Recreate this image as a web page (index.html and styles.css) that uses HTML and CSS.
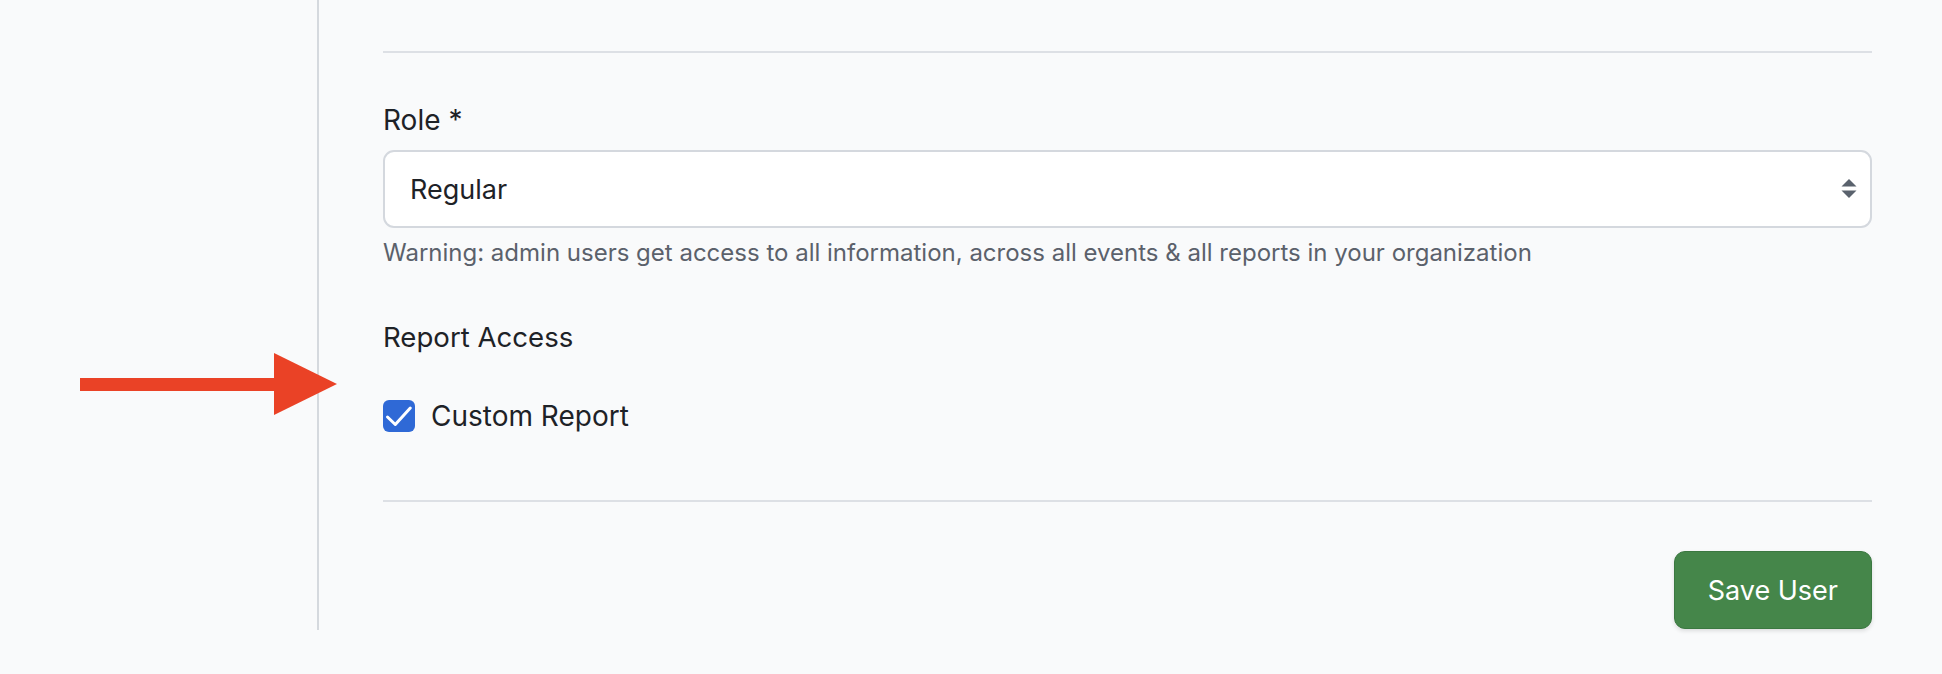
FILE: index.html
```html
<!DOCTYPE html>
<html lang="en">
<head>
<meta charset="utf-8">
<title>Edit User</title>
<link rel="stylesheet" href="styles.css">
</head>
<body>
<div class="layout">
  <aside class="sidebar"></aside>
  <main class="main">
    <hr class="divider divider-top">
    <label class="field-label" for="role">Role *</label>
    <div class="select-wrap">
      <select id="role" class="select">
        <option>Regular</option>
        <option>Admin</option>
      </select>
      <svg class="select-arrows" width="16" height="20" viewBox="0 0 16 20" aria-hidden="true">
        <path d="M8 0 L15.5 7.5 L0.5 7.5 Z" fill="#5a626d"/>
        <path d="M0.5 11.5 L15.5 11.5 L8 19 Z" fill="#5a626d"/>
      </svg>
    </div>
    <p class="help">Warning: admin users get access to all information, across all events &amp; all reports in your organization</p>
    <div class="section-title">Report Access</div>
    <label class="check-row">
      <span class="checkbox">
        <svg width="32" height="32" viewBox="0 0 32 32" aria-hidden="true">
          <path d="M4.5 17 L12.3 24.5 L27.3 8" fill="none" stroke="#ffffff" stroke-width="3" stroke-linecap="round" stroke-linejoin="round"/>
        </svg>
      </span>
      <span class="check-text">Custom Report</span>
    </label>
    <hr class="divider divider-bottom">
    <div class="actions">
      <button class="btn-save" type="button">Save User</button>
    </div>
  </main>
</div>
<svg class="annotation-arrow" width="260" height="64" viewBox="0 0 260 64" aria-hidden="true">
  <rect x="0" y="25" width="196" height="13" fill="#ea4226"/>
  <path d="M194 0 L257 31 L194 62 Z" fill="#ea4226"/>
</svg>
</body>
</html>
```

FILE: styles.css
```css
* { box-sizing: border-box; }

html, body {
  margin: 0;
  padding: 0;
  background: #f9fafb;
  font-family: Inter, "Noto Sans", "Liberation Sans", sans-serif;
  color: #1f2328;
}

body { position: relative; height: 674px; overflow: hidden; }

.layout {
  display: flex;
  height: 630px;
}

.sidebar {
  width: 319px;
  flex: 0 0 319px;
  border-right: 2px solid #d5d9de;
}

.main {
  flex: 1;
  display: flex;
  flex-direction: column;
  padding: 51px 70px 0 64px;
}

.divider {
  border: 0;
  border-top: 2px solid #dde0e5;
  margin: 0;
  width: 100%;
}

.field-label {
  margin-top: 49px;
  font-size: 28px;
  line-height: 36px;
  color: #1e2227;
}

.select-wrap {
  position: relative;
  margin-top: 12px;
}

.select {
  display: block;
  width: 100%;
  height: 78px;
  appearance: none;
  -webkit-appearance: none;
  background: #ffffff;
  border: 2px solid #d4d8de;
  border-radius: 11px;
  padding: 0 60px 0 25px;
  font-family: inherit;
  font-size: 27px;
  color: #1e2227;
}

.select-arrows {
  position: absolute;
  right: 15px;
  top: 29px;
  pointer-events: none;
}

.help {
  margin: 10px 0 0;
  font-size: 24px;
  line-height: 30px;
  color: #5b616b;
}

.section-title {
  margin-top: 51px;
  font-size: 27.6px;
  line-height: 36px;
  color: #1e2227;
}

.check-row {
  margin-top: 43px;
  display: flex;
  align-items: center;
  gap: 16px;
  height: 36px;
}

.checkbox {
  width: 32px;
  height: 32px;
  border-radius: 6px;
  background: #2f69d6;
  display: flex;
}

.check-text {
  font-size: 28px;
  color: #1e2227;
}

.divider-bottom { margin-top: 66px; }

.actions {
  display: flex;
  justify-content: flex-end;
  margin-top: 49px;
}

.btn-save {
  height: 78px;
  padding: 0 33px;
  background: #45864a;
  border: 1px solid #3b7841;
  border-radius: 11px;
  color: #ffffff;
  font-family: inherit;
  font-size: 27px;
  box-shadow: 0 2px 4px rgba(0, 0, 0, 0.12);
}

.annotation-arrow {
  position: absolute;
  left: 80px;
  top: 353px;
}
```
